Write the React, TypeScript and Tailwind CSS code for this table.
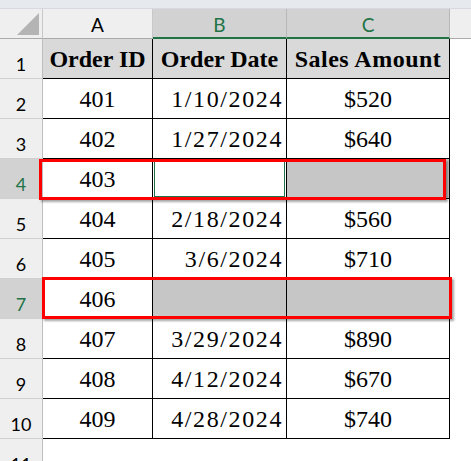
import React from "react";

const rows: { n: number; id: string; date: string; amt: string }[] = [
  { n: 2, id: "401", date: "1/10/2024", amt: "$520" },
  { n: 3, id: "402", date: "1/27/2024", amt: "$640" },
  { n: 4, id: "403", date: "", amt: "" },
  { n: 5, id: "404", date: "2/18/2024", amt: "$560" },
  { n: 6, id: "405", date: "3/6/2024", amt: "$710" },
  { n: 7, id: "406", date: "", amt: "" },
  { n: 8, id: "407", date: "3/29/2024", amt: "$890" },
  { n: 9, id: "408", date: "4/12/2024", amt: "$670" },
  { n: 10, id: "409", date: "4/28/2024", amt: "$740" },
];

const sans = { fontFamily: "Lato, 'Liberation Sans', sans-serif" };
const serif = { fontFamily: "'Liberation Serif', serif" };

function RowNum({ n, sel }: { n: number; sel?: boolean }) {
  return (
    <div
      className={`h-10 w-[43px] flex items-end justify-center pb-[5px] border-r border-b border-r-[#bdbdbd] border-b-[#d0d0d0] text-[18px] leading-none ${
        sel ? "bg-[#d2d2d2] text-[#217346]" : "bg-[#efefef] text-black"
      }`}
      style={sans}
    >
      {n}
    </div>
  );
}

export default function App() {
  return (
    <div className="w-[471px] h-[461px] bg-white overflow-hidden relative">
      <div className="h-[9px] bg-[#e6e9ee] border-b border-[#d6dae0]" />
      {/* column header row */}
      <div className="flex h-[30px]" style={sans}>
        <div className="w-[43px] bg-[#efefef] border-r border-b border-r-[#c8c8c8] border-b-[#ababab] relative">
          <svg className="absolute left-[17px] top-[4px]" width="22" height="22" viewBox="0 0 22 22">
            <polygon points="22,0 22,22 0,22" fill="#b4b4b4" />
          </svg>
        </div>
        <div className="w-[110px] bg-[#efefef] border-r border-b border-r-[#c8c8c8] border-b-[#ababab] flex items-center justify-center text-[19px] text-black leading-none pt-[2px]">
          A
        </div>
        <div className="w-[134px] bg-[#d2d2d2] border-r border-r-[#b8b8b8] border-b-2 border-b-[#217346] flex items-center justify-center text-[19px] text-[#217346] leading-none pt-[3px]">
          B
        </div>
        <div className="w-[163px] bg-[#d2d2d2] border-r border-r-[#b8b8b8] border-b-2 border-b-[#217346] flex items-center justify-center text-[19px] text-[#217346] leading-none pt-[3px]">
          C
        </div>
        <div className="flex-1 bg-[#efefef] border-b border-[#ababab]" />
      </div>
      {/* row 1 */}
      <div className="flex" style={serif}>
        <RowNum n={1} />
        <div className="w-[110px] h-10 bg-[#d9d9d9] border-r border-b border-black flex items-center justify-center text-[24px] font-bold text-black">
          Order ID
        </div>
        <div className="w-[134px] h-10 bg-[#d9d9d9] border-r border-b border-black flex items-center justify-center text-[24px] font-bold text-black">
          Order Date
        </div>
        <div className="w-[163px] h-10 bg-[#d9d9d9] border-r border-b border-black flex items-center justify-center text-[24px] font-bold text-black tracking-[0.5px]">
          Sales Amount
        </div>
      </div>
      {rows.map((r) => {
        const sel = r.n === 4 || r.n === 7;
        const bSel = r.n === 7;
        const active = r.n === 4;
        return (
          <div className="flex" style={serif} key={r.n}>
            <RowNum n={r.n} sel={sel} />
            <div className="w-[110px] h-10 bg-white border-r border-b border-black flex items-center justify-center text-[24px] text-black">
              {r.id}
            </div>
            {active ? (
              <div className="w-[134px] h-10 bg-white border-r border-b border-black pl-[1px] pr-[1px] pt-[2px] pb-[1px] flex">
                <div className="flex-1 border border-[#217346]" />
              </div>
            ) : (
              <div
                className={`w-[134px] h-10 border-r border-b border-black flex items-center justify-end pr-[3px] text-[24px] text-black tracking-[1.6px] ${
                  bSel ? "bg-[#c6c6c6]" : "bg-white"
                }`}
              >
                {r.date}
              </div>
            )}
            <div
              className={`w-[163px] h-10 border-r border-b border-black flex items-center justify-center text-[24px] text-black ${
                sel ? "bg-[#c6c6c6]" : "bg-white"
              }`}
            >
              {r.amt}
            </div>
          </div>
        );
      })}
      <div className="flex">
        <RowNum n={11} />
      </div>
      {/* red annotation boxes */}
      <div className="absolute left-[39px] top-[159px] w-[407px] h-[41px] border-[3px] border-[#ff0000] shadow-[2px_2px_2px_rgba(0,0,0,0.35)]" />
      <div className="absolute left-[42px] top-[277px] w-[410px] h-[42px] border-[3px] border-[#ff0000] shadow-[2px_2px_2px_rgba(0,0,0,0.35)]" />
    </div>
  );
}
